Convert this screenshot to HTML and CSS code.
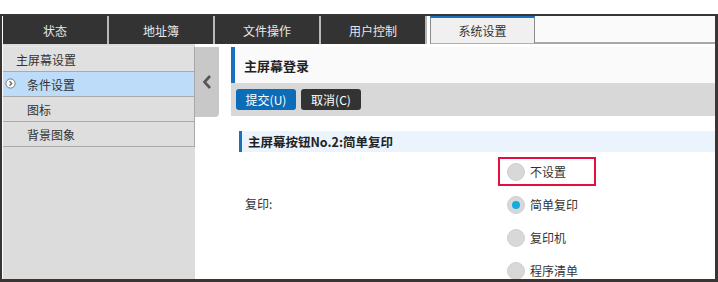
FILE: index.html
```html
<!DOCTYPE html>
<html lang="zh">
<head>
<meta charset="utf-8">
<link rel="stylesheet" href="styles.css">
</head>
<body>
<div class="frame">
  <div class="tabs">
    <div class="tab">状态</div>
    <div class="tab">地址簿</div>
    <div class="tab">文件操作</div>
    <div class="tab">用户控制</div>
    <div class="tab active">系统设置</div>
    <div class="tab-fill"></div>
  </div>
  <div class="body">
    <div class="sidebar">
      <ul class="menu">
        <li class="menu-head">主屏幕设置</li>
        <li class="menu-item selected">
          <span class="mark"><svg width="11" height="11" viewBox="0 0 11 11"><circle cx="5.5" cy="5.5" r="4.6" fill="#fff" stroke="#777" stroke-width="1"/><path d="M4.5 3.3 L6.7 5.5 L4.5 7.7" fill="none" stroke="#666" stroke-width="1.3"/></svg></span>条件设置
        </li>
        <li class="menu-item">图标</li>
        <li class="menu-item">背景图象</li>
      </ul>
    </div>
    <div class="collapse">
      <svg width="10" height="16" viewBox="0 0 10 16"><path d="M8 2 L2.5 8 L8 14" fill="none" stroke="#555" stroke-width="2.6" stroke-linejoin="miter"/></svg>
    </div>
    <div class="main">
      <div class="page-title">主屏幕登录</div>
      <div class="actions">
        <button class="btn btn-primary">提交(U)</button>
        <button class="btn btn-dark">取消(C)</button>
      </div>
      <div class="section-title">主屏幕按钮No.2:简单复印</div>
      <div class="form">
        <div class="label">复印:</div>
        <div class="options">
          <div class="option highlight"><span class="radio"></span>不设置</div>
          <div class="option"><span class="radio checked"></span>简单复印</div>
          <div class="option"><span class="radio"></span>复印机</div>
          <div class="option"><span class="radio"></span>程序清单</div>
        </div>
      </div>
    </div>
  </div>
</div>
</body>
</html>
```
FILE: styles.css
```css
* { box-sizing: border-box; }
html, body { margin: 0; padding: 0; background: #fff; overflow: hidden; }
body {
  padding-top: 14px;
  font-family: "Noto Sans CJK SC", "Noto Sans", sans-serif;
  font-size: 12px;
  color: #333;
}
.frame {
  width: 718px;
  height: 268px;
  border: 2px solid #3b3434;
  border-right-width: 3px;
  border-bottom-width: 3px;
  padding-left: 1px;
  display: flex;
  flex-direction: column;
  overflow: hidden;
}
.tabs {
  display: flex;
  height: 28px;
  flex: none;
}
.tab {
  width: 106px;
  height: 28px;
  background: #333;
  color: #e8e8e8;
  border-right: 2px solid #b8b8b8;
  display: flex;
  align-items: center;
  justify-content: center;
  font-size: 12px;
}
.tab.active {
  margin-left: 3px;
  width: 105px;
  background: #f0f0f0;
  color: #333;
  border-top: 2px solid #1a6fc0;
  border-left: 1px solid #8a8a8a;
  border-right: 1px solid #8a8a8a;
  border-bottom: 1px solid #b0b0b0;
}
.tab-fill {
  flex: 1;
  background: #fafafa;
  border-bottom: 2px solid #a8a8a8;
}
.body {
  flex: 1;
  display: flex;
  min-height: 0;
}
.sidebar {
  width: 192px;
  background: #dcdcdc;
  padding-top: 2px;
  flex: none;
}
.menu {
  list-style: none;
  margin: 0;
  padding: 0;
  border-right: 1px solid #a8a8a8;
  border-top: 1px solid #e8e8e8;
}
.menu li {
  height: 25px;
  border-bottom: 1px solid #aaa;
  display: flex;
  align-items: center;
  color: #333;
}
.menu-head { padding-left: 13px; background: #e0e0e0; }
.menu-item { padding-left: 24px; background: #dedede; position: relative; }
.menu-item.selected { background: #bcdcfa; }
.mark {
  position: absolute;
  left: 2px;
  top: 6px;
  width: 11px;
  height: 11px;
  display: flex;
}
.collapse {
  width: 24px;
  height: 70px;
  margin-top: 3px;
  background: #c8c8c8;
  border-radius: 0 0 4px 0;
  display: flex;
  align-items: center;
  justify-content: center;
  flex: none;
}
.main {
  flex: 1;
  margin-left: 12px;
  min-width: 0;
}
.page-title {
  height: 36px;
  margin-top: 3px;
  background: #fafafa;
  border-left: 4px solid #1a6fc0;
  padding-left: 9px;
  display: flex;
  align-items: center;
  font-size: 13px;
  font-weight: bold;
  color: #222;
}
.actions {
  height: 33px;
  background: #d8d8d8;
  display: flex;
  align-items: flex-start;
  gap: 5px;
  padding: 6px 0 0 5px;
}
.btn {
  width: 60px;
  height: 21px;
  border: none;
  border-radius: 3px;
  color: #fff;
  font-family: inherit;
  font-size: 12px;
  padding: 0;
  display: flex;
  align-items: center;
  justify-content: center;
}
.btn-primary { background: #0b6db8; }
.btn-dark { background: #333; }
.section-title {
  margin: 15px 0 0 8px;
  height: 21px;
  background: #ebf3fd;
  border-left: 3px solid #1a6fc0;
  padding-left: 6px;
  display: flex;
  align-items: center;
  font-weight: bold;
  font-size: 12.5px;
  color: #222;
}
.form {
  display: grid;
  grid-template-columns: 253px auto;
  margin: 5px 0 0 14px;
}
.label {
  grid-column: 1;
  grid-row: 1;
  margin-top: 38px;
  color: #333;
}
.options { grid-column: 2; grid-row: 1; }
.option {
  display: flex;
  align-items: center;
  gap: 5px;
  height: 29px;
  width: 98px;
  padding-left: 7px;
  border: 2px solid transparent;
  margin-bottom: 4px;
  white-space: nowrap;
  color: #333;
}
.option.highlight { border-color: #e2103c; }
.radio {
  width: 18px;
  height: 18px;
  border-radius: 50%;
  background: #d8d8d8;
  border: 1px solid #d0d0d0;
  display: flex;
  align-items: center;
  justify-content: center;
  flex: none;
}
.radio.checked::after {
  content: "";
  width: 8px;
  height: 8px;
  border-radius: 50%;
  background: #14acdf;
}
```
